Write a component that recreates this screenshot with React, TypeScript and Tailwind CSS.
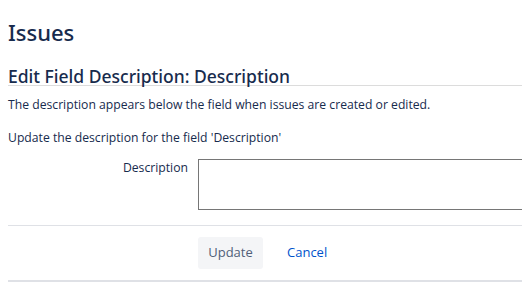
import React from 'react'

const App: React.FC = () => {
    return (
        <div className="min-h-[298px] w-[522px] overflow-hidden bg-white pl-2 text-[#172b4d]" style={{ fontFamily: '"Open Sans", "Noto Sans", sans-serif' }}>
            <h1 className="pt-[17px] text-[22px] font-medium leading-[30px] text-[#172b4d]" style={{ fontFamily: '"Noto Sans", sans-serif' }}>Issues</h1>
            <h2 className="mt-[20px] border-b border-[#dcdcdc] text-[17.5px] font-medium leading-[18px]" style={{ fontFamily: '"Noto Sans", sans-serif' }}>Edit Field Description: Description</h2>
            <p className="mt-[11px] text-[12.2px] leading-[16px]">The description appears below the field when issues are created or edited.</p>
            <p className="mt-[17px] text-[12.2px] leading-[16px]">Update the description for the field 'Description'</p>

            {/* form */}
            <div className="mt-[13px] flex border-b border-[#dfe1e6] pb-[15px]">
                <label className="w-[190px] shrink-0 pr-[10px] pt-[1px] text-right text-[12.2px] leading-[16px]">Description</label>
                <textarea className="h-[51px] w-[340px] shrink-0 resize-none border border-[#767676] bg-white" />
            </div>
            <div className="flex items-center gap-[24px] border-b-2 border-[#dfe1e6] pb-[11px] pl-[190px] pt-[11px]">
                <button className="h-[32px] w-[65px] rounded-[3px] bg-[#f4f5f7] text-[13px] text-[#505f79]" style={{ color: '#505f79' }}>Update</button>
                <a className="text-[13px] text-[#0052cc]" href="#">Cancel</a>
            </div>
        </div>
    )
}

export default App
